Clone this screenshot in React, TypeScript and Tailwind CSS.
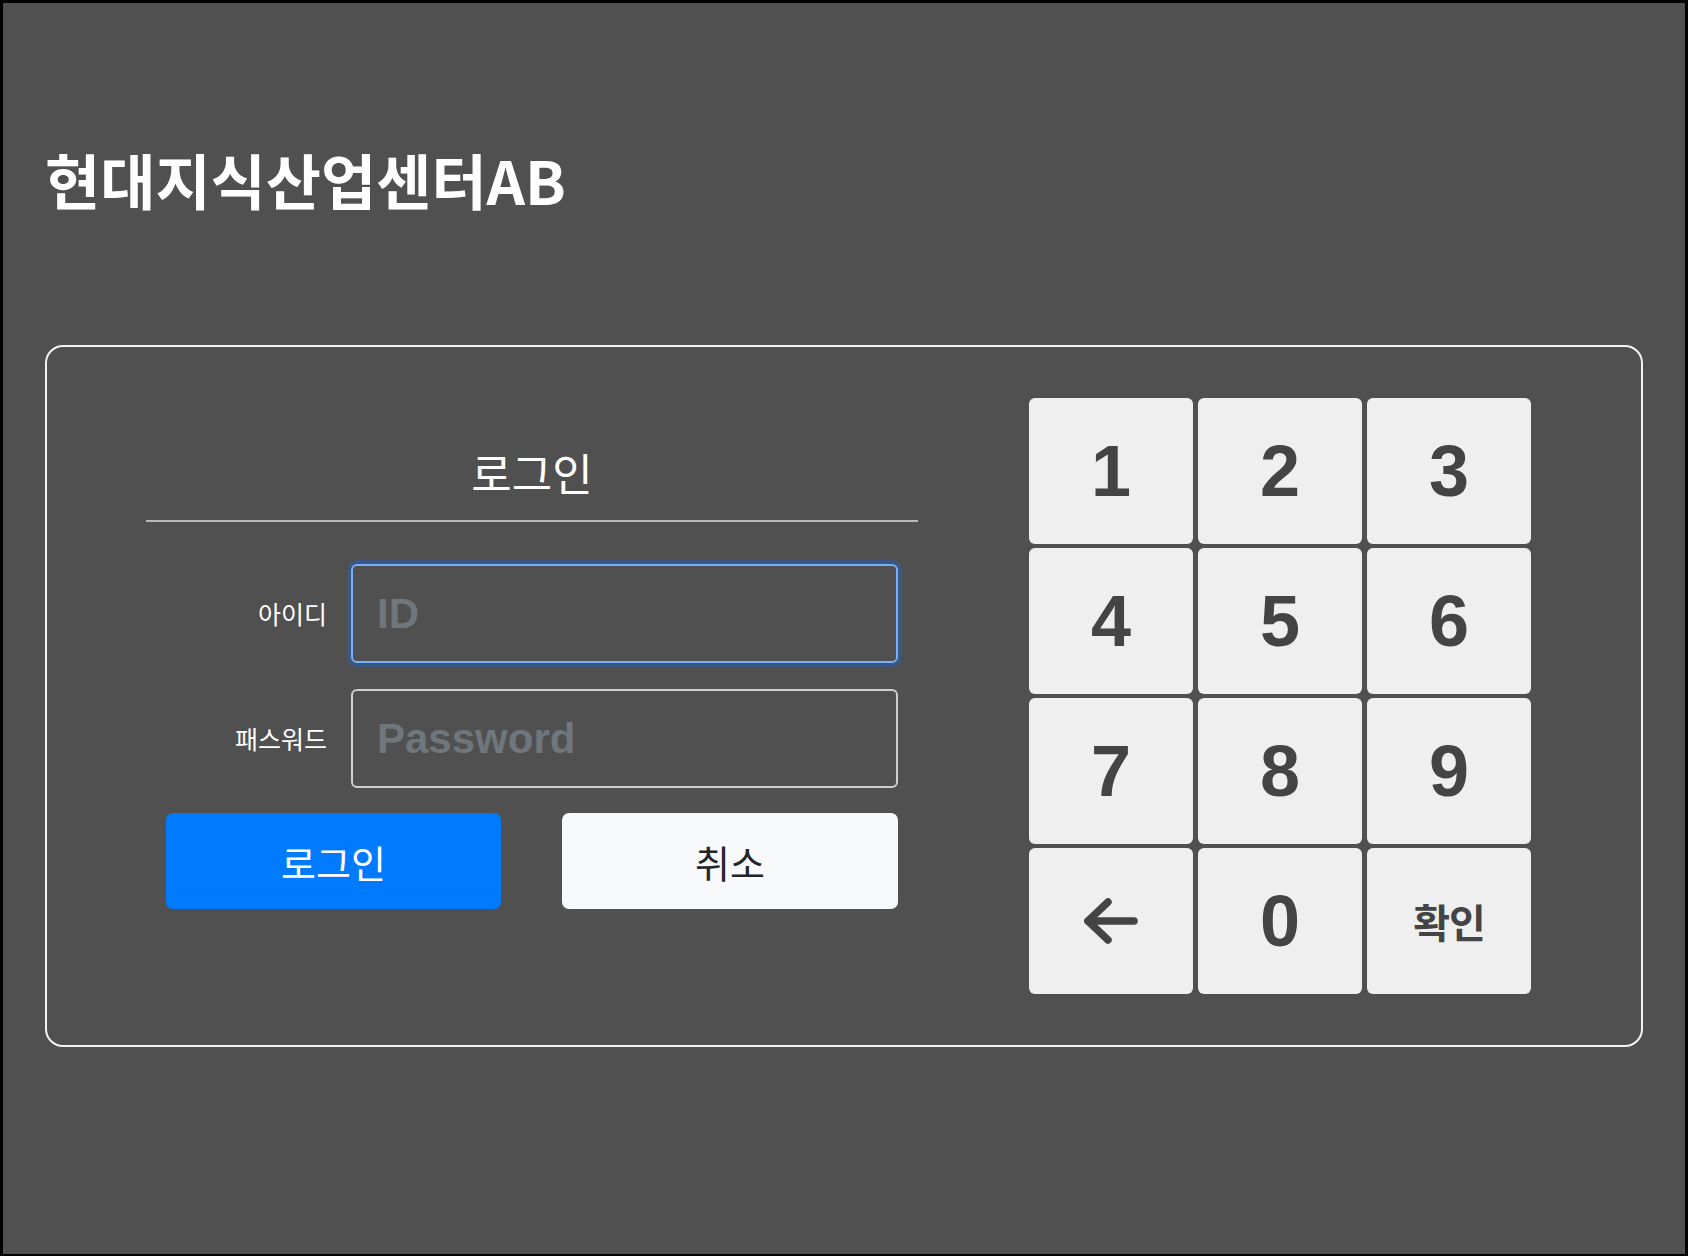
import { useState } from "react";

const KR = { fontFamily: '"Noto Sans CJK KR", "Noto Sans", sans-serif' };
const LATIN = { fontFamily: '"Liberation Sans", Arial, sans-serif' };

const BackArrow = () => (
  <svg width="54" height="46" viewBox="0 0 54 46" fill="none" stroke="#444444" strokeWidth="7.5" strokeLinecap="round" strokeLinejoin="round">
    <path d="M4 23H50" />
    <path d="M24 4L4 23L24 42" />
  </svg>
);

const Key = ({ children, onClick }: { children: React.ReactNode; onClick?: () => void }) => (
  <button
    onClick={onClick}
    className="flex items-center justify-center rounded-[6px] bg-[#efefef] text-[#444444]"
  >
    {children}
  </button>
);

export default function App() {
  const [id, setId] = useState("");
  const [pw, setPw] = useState("");
  const [focus, setFocus] = useState<"id" | "pw">("id");

  const press = (d: string) => {
    if (focus === "id") setId(id + d);
    else setPw(pw + d);
  };
  const back = () => {
    if (focus === "id") setId(id.slice(0, -1));
    else setPw(pw.slice(0, -1));
  };

  return (
    <div
      className="box-border h-[1256px] w-full border-[3px] border-b-2 border-black bg-[#505050] px-[42px] pt-[140px]"
      style={KR}
    >
      <h1 className="text-[60px] font-semibold leading-[1.2] text-white">현대지식산업센터AB</h1>

      <div className="mt-[130px] flex items-start rounded-[18px] border-2 border-[#f2f2f2] py-[51px] pl-[99px]">
        {/* login form */}
        <div className="mt-[48px] w-[772px] shrink-0">
          <h2 className="text-center text-[44px] leading-[52px] text-white">로그인</h2>
          <div className="mt-[22px] h-[2px] bg-[#b8b8b8]" />

          <div className="px-[20px]">
            <div className="mt-[42px] flex items-center">
              <label className="block w-[185px] shrink-0 pr-[24px] text-right text-[25px] text-white">아이디</label>
              <input
                value={id}
                onChange={(e) => setId(e.target.value)}
                onFocus={() => setFocus("id")}
                placeholder="ID"
                className="h-[99px] min-w-0 flex-1 rounded-[6px] border-2 border-[#79aefc] bg-transparent pl-[24px] text-[42px] font-bold text-white shadow-[0_0_0_4px_rgba(13,110,253,0.3)] outline-none placeholder:text-[#6f767c]"
                style={LATIN}
              />
            </div>

            <div className="mt-[26px] flex items-center">
              <label className="block w-[185px] shrink-0 pr-[24px] text-right text-[25px] text-white">패스워드</label>
              <input
                type="password"
                value={pw}
                onChange={(e) => setPw(e.target.value)}
                onFocus={() => setFocus("pw")}
                placeholder="Password"
                className="h-[99px] min-w-0 flex-1 rounded-[6px] border-2 border-[#cfcfcf] bg-transparent pl-[24px] text-[42px] font-bold text-white outline-none placeholder:text-[#6f767c]"
                style={LATIN}
              />
            </div>

            <div className="mt-[25px] flex justify-between">
              <button className="h-[96px] w-[335px] rounded-[7px] bg-[#007bff] text-[38px] text-white">로그인</button>
              <button className="h-[96px] w-[336px] rounded-[7px] bg-[#f8f9fa] text-[38px] text-[#212529]">취소</button>
            </div>
          </div>
        </div>

        {/* keypad */}
        <div
          className="ml-[111px] grid grid-cols-[repeat(3,164px)] auto-rows-[146px] gap-x-[5px] gap-y-[4px] text-[72px] font-bold leading-none"
          style={LATIN}
        >
          {["1", "2", "3", "4", "5", "6", "7", "8", "9"].map((d) => (
            <Key key={d} onClick={() => press(d)}>
              {d}
            </Key>
          ))}
          <Key onClick={back}>
            <BackArrow />
          </Key>
          <Key onClick={() => press("0")}>0</Key>
          <Key>
            <span className="text-[40px] font-bold tracking-[-1px]" style={KR}>
              확인
            </span>
          </Key>
        </div>
      </div>
    </div>
  );
}
